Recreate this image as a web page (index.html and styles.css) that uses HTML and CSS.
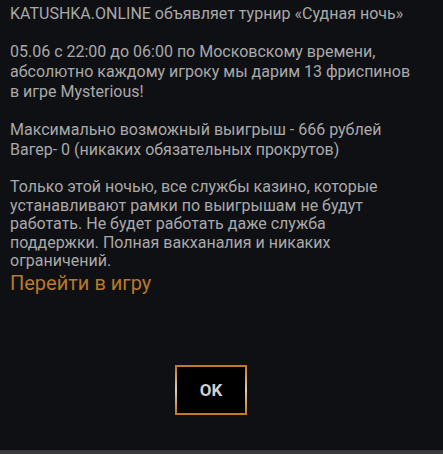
FILE: index.html
```html
<!DOCTYPE html>
<html lang="ru">
<head>
  <meta charset="UTF-8" />
  <meta name="viewport" content="width=device-width, initial-scale=1">
  <title>Турнир</title>
  <link rel="stylesheet" href="styles.css">
</head>
<body>

  <div class="modal">
    <div class="content">
      <p>KATUSHKA.ONLINE объявляет турнир «Судная ночь»</p>
      <p>05.06 с 22:00 до 06:00 по Московскому времени, абсолютно каждому игроку мы дарим 13 фриспинов в игре Mysterious!</p>
      <p>Максимально возможный выигрыш - 666 рублей<br>Вагер- 0 (никаких обязательных прокрутов)</p>
      <p class="last">Только этой ночью, все службы казино, которые устанавливают рамки по выигрышам не будут работать. Не будет работать даже служба поддержки. Полная вакханалия и никаких ограничений.</p>
      <a href="#" class="play">Перейти в игру</a>
    </div>
    <div class="actions">
      <button class="ok">OK</button>
    </div>
  </div>
  <div class="scrollbar"></div>

</body>
</html>
```

FILE: styles.css
```css
html, body {
  margin: 0;
  height: 100%;
}

body {
  background: #0f1014;
  font-family: 'Roboto', sans-serif;
  color: #a9a9a9;
  display: flex;
  flex-direction: column;
}

.modal {
  flex: 1;
  display: flex;
  flex-direction: column;
}

.content {
  padding: 4px 10px 0 10px;
  width: 408px;
  font-size: 16px;
  line-height: 20px;
}

.content p {
  margin: 0 0 18px 0;
}

.content p.last {
  margin-bottom: 0;
  line-height: 18.5px;
}

.play {
  display: block;
  color: #b8792a;
  font-size: 20px;
  line-height: 24px;
  text-decoration: none;
}

.actions {
  width: 422px;
  display: flex;
  justify-content: center;
  margin-top: 70px;
}

.ok {
  width: 72px;
  height: 50px;
  background: #000;
  color: #cfcfcf;
  font-family: 'Roboto', sans-serif;
  font-weight: bold;
  font-size: 17px;
  border: 2px solid;
  border-image: linear-gradient(to bottom, #c07a22, #e0cdb0 50%, #c07a22) 1;
  cursor: pointer;
}

.scrollbar {
  height: 4px;
  background: #3a3a3a;
}
```
